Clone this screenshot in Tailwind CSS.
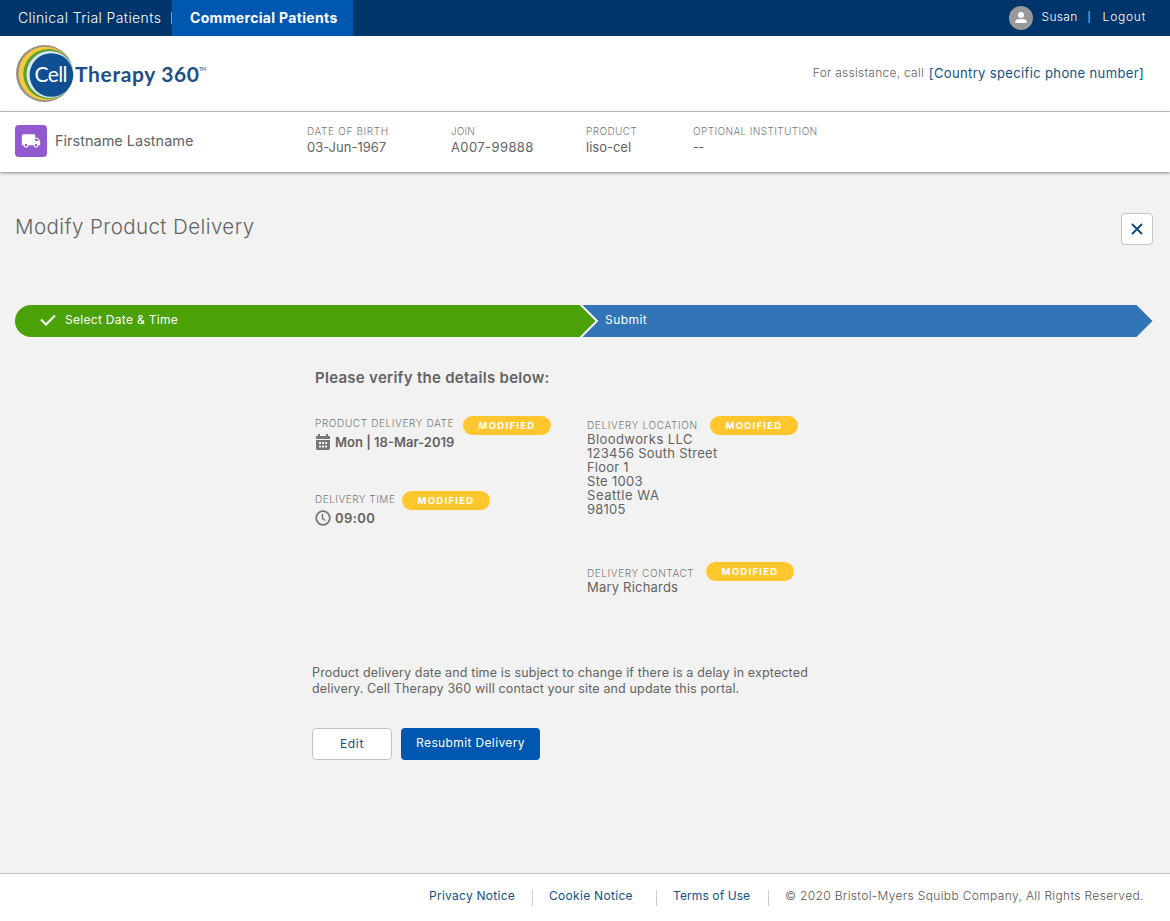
<!DOCTYPE html>
<html lang="en">
<head>
    <meta charset="UTF-8">
    <meta name="viewport" content="width=device-width, initial-scale=1.0">
    <title>Modify Product Delivery</title>
    <script src="https://cdn.jsdelivr.net/npm/@tailwindcss/browser@4"></script>
</head>
<body class="flex flex-col h-[921px] overflow-hidden bg-[#f2f2f2] font-['Inter',sans-serif] text-[#636363] whitespace-nowrap">

    <!-- Top Bar -->
    <nav class="flex h-9 shrink-0 bg-[#00356b] text-white">
        <a class="flex items-center w-[172px] pl-[18px] text-[14px] font-light"><span class="w-[154px] border-r border-white/50 leading-3 tracking-[0.4px]">Clinical Trial Patients</span></a>
        <a class="flex items-center w-[181px] pl-[18px] pb-0.5 bg-[#0057b0] text-[14px] font-bold tracking-[0.33px]">Commercial Patients</a>
        <div class="flex items-start ml-auto pr-6 text-[12px] leading-[34px] font-light">
            <svg class="w-6 h-6 mt-1.5 mr-[9px]" viewBox="0 0 24 24">
                <circle cx="12" cy="12" r="12" fill="#999"/>
                <circle cx="12" cy="9" r="3" fill="#fff"/>
                <path d="M6.300 17v-1.300C6.300 13.700 9 13 12 13s5.700.7 5.700 2.700V17z" fill="#fff"/>
            </svg>
            <span class="w-[46px] tracking-[0.3px]">Susan</span>
            <span class="w-[15px] text-[10px]">|</span>
            <span class="tracking-[0.75px]">Logout</span>
        </div>
    </nav>

    <!-- Header -->
    <header class="flex items-center h-[76px] shrink-0 pl-4 pr-[26px] bg-white border-b border-[#c4c4c4]">
        <svg class="w-[194px] h-[58px]" viewBox="0 0 194 58">
            <circle cx="28.500" cy="28.500" r="28.500" fill="#9b9089"/>
            <circle cx="29.300" cy="28.500" r="26.700" fill="#f4c93a"/>
            <circle cx="32.300" cy="29" r="25" fill="#5f9f35"/>
            <circle cx="34" cy="29.500" r="23.500" fill="#d5e8f3"/>
            <circle cx="35.400" cy="30" r="21.800" fill="#0f4f92"/>
            <text x="18.500" y="36.500" textLength="33" font-family="Lato" font-size="21" fill="#fff">Cell</text>
            <text x="59" y="36.500" textLength="124" font-family="Lato" font-weight="700" font-size="21" fill="#1c4f86">Therapy 360</text>
            <text x="183" y="26" textLength="7" font-family="Lato" font-size="5" fill="#1c4f86">TM</text>
        </svg>
        <p class="flex ml-auto pb-px leading-5 font-light"><span class="w-[116px] text-[12px] tracking-[0.25px]">For assistance, call</span><span class="text-[#0f5288] text-[13px] tracking-[0.36px] font-normal">[Country specific phone number]</span></p>
    </header>

    <!-- Patient Info -->
    <section class="flex h-[60px] shrink-0 pl-[15px] bg-white shadow-[0_1px_3px_rgba(0,0,0,0.45)]">
        <div class="flex w-[292px] pt-[13px]">
            <div class="flex items-center justify-center w-8 h-8 mr-2 rounded bg-[#9359cf]">
                <svg class="w-5 h-5" viewBox="0 0 24 24" fill="#fff"><path d="M20 8h-3V4H3c-1.100 0-2 .9-2 2v11h2c0 1.660 1.340 3 3 3s3-1.340 3-3h6c0 1.660 1.340 3 3 3s3-1.340 3-3h2v-5l-3-4zM6 18.500c-.83 0-1.500-.67-1.500-1.500s.67-1.500 1.500-1.500 1.500.67 1.500 1.500-.67 1.500-1.500 1.500zm13.500-9l1.960 2.500H17V9.500h2.500zm-1.500 9c-.83 0-1.500-.67-1.500-1.500s.67-1.500 1.500-1.500 1.500.67 1.500 1.500-.67 1.500-1.500 1.500z"/></svg>
            </div>
            <span class="text-[14.5px] leading-8 h-8">Firstname Lastname</span>
        </div>
        <dl class="grid grid-cols-[144px_135px_107px_200px] pt-[11px] h-12 text-[13px]">
            <div><dt class="text-[10px] leading-4 font-light text-[#777] tracking-[0.65px]">DATE OF BIRTH</dt><dd class="leading-4">03-Jun-1967</dd></div>
            <div><dt class="text-[10px] leading-4 font-light text-[#777] tracking-[0.1px]">JOIN</dt><dd class="leading-4 tracking-[0.4px]">A007-99888</dd></div>
            <div><dt class="text-[10px] leading-4 font-light text-[#777] tracking-[0.4px]">PRODUCT</dt><dd class="leading-4">liso-cel</dd></div>
            <div><dt class="text-[10px] leading-4 font-light text-[#777] tracking-[0.4px]">OPTIONAL INSTITUTION</dt><dd class="leading-4 tracking-[-0.8px]">--</dd></div>
        </dl>
    </section>

    <main class="flex-1 pl-[15px] pr-[17px] pt-[41px]">
        <div class="flex justify-between h-[92px]">
            <h1 class="text-[20.5px] leading-7 font-light tracking-[0.42px]">Modify Product Delivery</h1>
            <button class="flex items-center justify-center w-8 h-8 rounded border border-[#c4c4c4] bg-white">
                <svg class="w-3 h-3" viewBox="0 0 12 12" fill="none" stroke="#0b4a86" stroke-width="1.900"><path d="M1 1l10 10M11 1L1 11"/></svg>
            </button>
        </div>

        <!-- Progress Steps -->
        <div class="relative flex h-8 text-[12px] leading-[30px] text-white">
            <svg class="absolute inset-0 w-[1138px] h-8" viewBox="0 0 1138 32">
                <path d="M566 0H1121.500L1137.500 16L1121.500 32H566z" fill="#3275b6"/>
                <path d="M16 0H565.500L581.500 16L565.500 32H16A16 16 0 0 1 16 0z" fill="#4ba208"/>
                <path d="M565 -1L582 16L565 33" fill="none" stroke="#fff" stroke-width="2"/>
                <path d="M26 14.500l5 5L40 10.500" fill="none" stroke="#fff" stroke-width="2"/>
            </svg>
            <div class="relative w-[540px] pl-[50px] tracking-[0.3px]">Select Date &amp; Time</div>
            <div class="relative pl-[50px] tracking-[0.45px]">Submit</div>
        </div>

        <!-- Delivery Details -->
        <h2 class="pl-[300px] pt-[31px] text-[15px] leading-5 font-semibold tracking-[0.28px]">Please verify the details below:</h2>
        <div class="grid grid-cols-[272px_1fr] pl-[300px] pt-7 h-[277px] text-[13px]">
            <div>
                <div class="flex h-[75px]">
                    <div class="w-[148px] -mt-px">
                        <div class="text-[10px] leading-4 font-light text-[#777] tracking-[0.62px]">PRODUCT DELIVERY DATE</div>
                        <div class="flex items-center h-[22px] font-semibold">
                            <svg class="w-4 h-4 mr-1" viewBox="0 0 16 16" fill="#777">
                                <path d="M3 0h2v2h6V0h2v2h2v3H1V2h2zM1 6h14v8.500L14 16H2l-1-1.500zM4 8v2h2V8zm3 0v2h2V8zm3 0v2h2V8zM4 11.500v2h2v-2zm3 0v2h2v-2zm3 0v2h2v-2z" fill-rule="evenodd"/>
                            </svg>
                            <span class="pt-0.5">Mon | 18-Mar-2019</span>
                        </div>
                    </div>
                    <b class="w-[88px] h-[19px] rounded-full bg-[#ffc62d] text-center text-[9.5px] leading-[19px] tracking-[1.3px] text-white">MODIFIED</b>
                </div>
                <div class="flex">
                    <div class="w-[87px]">
                        <div class="text-[10px] leading-4 font-light text-[#777] tracking-[0.52px]">DELIVERY TIME</div>
                        <div class="flex items-center h-[22px] font-semibold">
                            <svg class="w-4 h-4 mr-1" viewBox="0 0 16 16" fill="none" stroke="#777" stroke-width="1.700"><circle cx="8" cy="8" r="6.800"/><path d="M7.500 4v4.500l2.700 2" stroke-width="1.500"/></svg>
                            <span class="pt-0.5 tracking-[0.4px]">09:00</span>
                        </div>
                    </div>
                    <b class="w-[88px] h-[19px] rounded-full bg-[#ffc62d] text-center text-[9.5px] leading-[19px] tracking-[1.3px] text-white">MODIFIED</b>
                </div>
            </div>
            <div>
                <div class="flex h-4">
                    <div class="w-[123px] text-[10px] leading-[19px] font-light text-[#777] tracking-[0.65px]">DELIVERY LOCATION</div>
                    <b class="w-[88px] h-[19px] rounded-full bg-[#ffc62d] text-center text-[9.5px] leading-[19px] tracking-[1.3px] text-white">MODIFIED</b>
                </div>
                <address class="h-[130px] not-italic leading-[14px]">
                    <span class="tracking-[0.42px]">Bloodworks LLC</span><br>
                    <span class="tracking-[0.27px]">123456 South Street</span><br>
                    <span class="tracking-[0.2px]">Floor 1</span><br>
                    <span class="tracking-[0.3px]">Ste 1003</span><br>
                    <span class="tracking-[0.55px]">Seattle WA</span><br>
                    <span class="tracking-[0.2px]">98105</span>
                </address>
                <div class="flex h-[18px]">
                    <div class="w-[119px] text-[10px] leading-[23px] font-light text-[#777] tracking-[0.6px]">DELIVERY CONTACT</div>
                    <b class="w-[88px] h-[19px] rounded-full bg-[#ffc62d] text-center text-[9.5px] leading-[19px] tracking-[1.3px] text-white">MODIFIED</b>
                </div>
                <div class="leading-[14px] tracking-[0.2px]">Mary Richards</div>
            </div>
        </div>

        <div class="pl-[297px]">
            <p class="text-[12.5px] leading-4 tracking-[0.15px]">Product delivery date and time is subject to change if there is a delay in exptected<br>
            delivery. Cell Therapy 360 will contact your site and update this portal.</p>
            <div class="flex gap-[9px] pt-[31px] text-[12px]">
                <button class="w-20 h-8 rounded border border-[#c4c4c4] bg-white leading-[30px] tracking-[0.7px] text-[#0f5288]">Edit</button>
                <button class="w-[139px] h-8 pb-0.5 rounded bg-[#0057b0] leading-[30px] tracking-[0.37px] text-white">Resubmit Delivery</button>
            </div>
        </div>
    </main>

    <footer class="flex h-12 shrink-0 pl-[429px] bg-white border-t border-[#c4c4c4] text-[12px] leading-[44px] text-[#0f5288]">
        <span class="w-[103px] tracking-[0.26px]">Privacy Notice</span>
        <span class="w-px h-4 mt-4 mr-4 bg-[#ccc]"></span>
        <span class="w-[107px] tracking-[0.3px]">Cookie Notice</span>
        <span class="w-px h-4 mt-4 mr-4 bg-[#ccc]"></span>
        <span class="w-[95px] tracking-[0.1px]">Terms of Use</span>
        <span class="w-px h-4 mt-4 mr-4 bg-[#ccc]"></span>
        <span class="font-light text-[#555] tracking-[0.35px]">© 2020 Bristol-Myers Squibb Company, All Rights Reserved.</span>
    </footer>
</body>
</html>
